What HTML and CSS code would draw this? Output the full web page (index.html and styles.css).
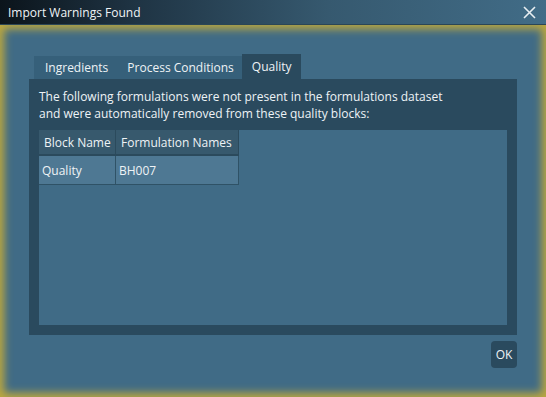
FILE: index.html
```html
<!DOCTYPE html>
<html lang="en">
<head>
    <meta charset="UTF-8">
    <title>Import Warnings Found</title>
    <link rel="stylesheet" href="styles.css">
</head>
<body>
    <div class="window">
        <!-- title bar -->
        <div class="titlebar">
            <span class="title">Import Warnings Found</span>
            <svg class="close" width="13" height="13" viewBox="0 0 13 13">
                <path d="M1 1 L12 12 M12 1 L1 12" stroke="#e8eef2" stroke-width="1.6" fill="none"/>
            </svg>
        </div>

        <!-- dialog body -->
        <div class="content">
            <div class="tabs">
                <div class="tab">Ingredients</div>
                <div class="tab">Process Conditions</div>
                <div class="tab active">Quality</div>
            </div>
            <div class="panel">
                <p class="message">The following formulations were not present in the formulations dataset<br>and were automatically removed from these quality blocks:</p>
                <div class="list">
                    <table class="grid">
                        <tr>
                            <th class="col-block">Block Name</th>
                            <th class="col-names">Formulation Names</th>
                        </tr>
                        <tr>
                            <td>Quality</td>
                            <td>BH007</td>
                        </tr>
                    </table>
                </div>
            </div>
            <div class="buttons">
                <button class="ok">OK</button>
            </div>
        </div>
    </div>
</body>
</html>
```

FILE: styles.css
```css
/* global */
body, html {
    margin: 0;
    padding: 0;
    width: 546px;
    height: 397px;
    overflow: hidden;
    font-family: 'Open Sans', 'Noto Sans', sans-serif;
    font-size: 12px;
    color: #eef3f6;
}

.window {
    display: flex;
    flex-direction: column;
    width: 546px;
    height: 397px;
    background: #406b86;
}

/* title bar */
.titlebar {
    display: flex;
    align-items: center;
    justify-content: space-between;
    height: 25px;
    padding: 0 10px 0 8px;
    background: linear-gradient(to right, #0b141b 0%, #1f3444 25%, #36596f 60%, #416c87 100%);
    border-bottom: 1px solid #2b4656;
    box-sizing: border-box;
}

.title {
    font-size: 12px;
    color: #f0f4f7;
}

/* body with the yellow glow edge */
.content {
    flex: 1;
    display: flex;
    flex-direction: column;
    padding: 29px 29px 0 29px;
    box-shadow: inset 0 0 8px 4px #bfa93d;
}

.tabs {
    display: flex;
    align-items: flex-end;
    height: 25px;
    margin-left: 5px;
}

.tab {
    height: 23px;
    line-height: 23px;
    padding: 0 8px 0 11px;
    background: #36607a;
    white-space: nowrap;
}

.tab.active {
    height: 25px;
    line-height: 25px;
    padding: 0 9px 0 10px;
    background: #2a4a5e;
}

.panel {
    height: 256px;
    padding: 9px 10px 10px 10px;
    box-sizing: border-box;
    display: flex;
    flex-direction: column;
    background: #2a4a5e;
}

.message {
    margin: 0 0 8px 0;
    line-height: 17px;
}

.list {
    flex: 1;
    background: #406b86;
}

.grid {
    border-collapse: collapse;
    table-layout: fixed;
    width: 198px;
}

.grid th {
    height: 24px;
    padding: 0 5px;
    font-weight: normal;
    text-align: left;
    white-space: nowrap;
    background: #37596d;
    border-right: 1px solid #2b4a5c;
    border-bottom: 2px solid #2b4a5c;
}

.grid td {
    height: 28px;
    padding: 0 3px;
    background: #4e7893;
    border-right: 1px solid #2f5266;
    border-bottom: 1px solid #2f5266;
}

.col-block {
    width: 66px;
}

.col-names {
    width: 112px;
}

.buttons {
    display: flex;
    justify-content: flex-end;
    padding-top: 6px;
}

.ok {
    width: 26px;
    height: 27px;
    padding: 0;
    border: none;
    border-radius: 4px;
    background: #2a4a5e;
    color: #eef3f6;
    font-family: 'Open Sans', 'Noto Sans', sans-serif;
    font-size: 12px;
}
```
